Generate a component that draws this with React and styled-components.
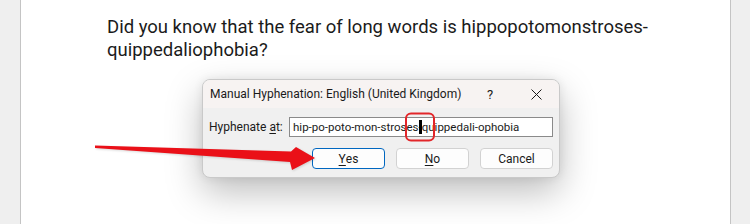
import React from 'react';
import styled, { createGlobalStyle } from 'styled-components';

const GlobalStyle = createGlobalStyle`
  html, body {
    margin: 0;
    padding: 0;
    background: #efefef;
  }
  body {
    font-family: Roboto, "Noto Sans", "Liberation Sans", sans-serif;
    overflow: hidden;
  }
`;

const BUTTONS = [
  { id: 1, key: 'Y', rest: 'es', primary: true },
  { id: 2, key: 'N', rest: 'o', primary: false },
  { id: 3, key: '', rest: 'Cancel', primary: false },
];

const App = () => {
  return (
    <>
      <GlobalStyle />
      <Page>
        <Paragraph>
          Did you know that the fear of long words is hippopotomonstroses-
          <br />
          quippedaliophobia?
        </Paragraph>
        <Dialog>
          <TitleBar>
            <Title>Manual Hyphenation: English (United Kingdom)</Title>
            <TitleButton>?</TitleButton>
            <TitleButton>
              <svg width="11" height="11" viewBox="0 0 11 11">
                <path d="M0.5 0.5 L10.5 10.5 M10.5 0.5 L0.5 10.5" stroke="#1a1a1a" strokeWidth="1" fill="none" />
              </svg>
            </TitleButton>
          </TitleBar>
          <Body>
            <FieldRow>
              <Label>
                Hyphenate <u>a</u>t:
              </Label>
              <Input>
                hip-po-poto-mon-stroses<Cursor>-</Cursor>quippedali-ophobia
              </Input>
            </FieldRow>
            <ButtonRow>
              {BUTTONS.map((b) => (
                <Button key={b.id} $primary={b.primary}>
                  {b.key && <u>{b.key}</u>}
                  {b.rest}
                </Button>
              ))}
            </ButtonRow>
          </Body>
        </Dialog>
        <Arrow width="230" height="36" viewBox="0 0 230 36">
          <path
            d="M4 5.5 L200 11.5 L205 7 L224 18 L201 30 L199 22 L4 8 Z"
            fill="#ea1018"
          />
        </Arrow>
      </Page>
    </>
  );
};

export default App;

const Page = styled.div`
  position: relative;
  box-sizing: border-box;
  margin-left: 20px;
  width: 711px;
  height: 224px;
  background: #ffffff;
  border-left: 1px solid #c4c4c4;
  border-right: 1px solid #c4c4c4;
  padding-top: 16px;
`;

const Paragraph = styled.p`
  margin: 0;
  padding-left: 86px;
  font-size: 18.5px;
  line-height: 23px;
  color: #1b1b1b;
  white-space: nowrap;
`;

const Dialog = styled.div`
  box-sizing: border-box;
  margin: 17px 0 0 181px;
  width: 358px;
  height: 99px;
  border: 1px solid #c9c9c9;
  border-radius: 8px;
  background: #f0f0f0;
  box-shadow: 0 14px 36px rgba(0, 0, 0, 0.26), 0 0 10px rgba(0, 0, 0, 0.08);
  overflow: hidden;
`;

const TitleBar = styled.div`
  display: flex;
  align-items: center;
  height: 28px;
  padding-left: 7px;
  background: #f7f3f2;
`;

const Title = styled.div`
  flex: 1;
  font-size: 12px;
  color: #1a1a1a;
  white-space: nowrap;
`;

const TitleButton = styled.div`
  display: flex;
  align-items: center;
  justify-content: center;
  width: 46px;
  height: 28px;
  font-size: 13px;
  color: #1a1a1a;
`;

const Body = styled.div`
  padding: 9px 6px 8px 6px;
  display: flex;
  flex-direction: column;
  gap: 11px;
`;

const FieldRow = styled.div`
  display: flex;
  align-items: center;
`;

const Label = styled.div`
  flex: none;
  width: 80px;
  font-size: 12px;
  color: #1a1a1a;

  u {
    text-underline-offset: 2px;
  }
`;

const Input = styled.div`
  box-sizing: border-box;
  width: 264px;
  height: 20px;
  padding-left: 3px;
  border: 1px solid #8a8a8a;
  background: #ffffff;
  font-size: 11.5px;
  line-height: 18px;
  color: #1a1a1a;
  white-space: nowrap;
`;

const Cursor = styled.span`
  position: relative;
  background: #000000;
  color: #000000;

  &::after {
    content: '';
    position: absolute;
    left: 50%;
    top: 50%;
    width: 30px;
    height: 29px;
    box-sizing: border-box;
    transform: translate(-50%, -50%);
    border: 2px solid #e2262a;
    border-radius: 6px;
  }
`;

const ButtonRow = styled.div`
  display: flex;
  justify-content: flex-end;
  gap: 11px;
`;

const Button = styled.div`
  box-sizing: border-box;
  display: flex;
  align-items: center;
  justify-content: center;
  width: 73px;
  height: 21px;
  border: 1px solid ${(props) => (props.$primary ? '#0067c0' : '#d2d2d2')};
  border-radius: 4px;
  background: #fdfdfd;
  font-size: 12px;
  color: #1a1a1a;

  u {
    text-underline-offset: 2px;
  }
`;

const Arrow = styled.svg`
  position: absolute;
  left: 70px;
  top: 140px;
  filter: drop-shadow(1px 1px 1px rgba(0, 0, 0, 0.15));
`;
